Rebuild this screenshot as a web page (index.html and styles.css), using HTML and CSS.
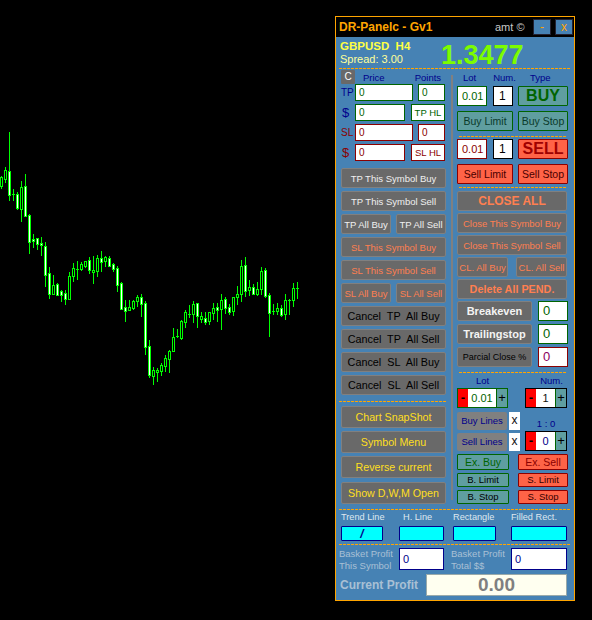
FILE: index.html
```html
<!DOCTYPE html>
<html lang="en">
<head>
<meta charset="utf-8">
<title>DR-Panelc - Gv1</title>
<link rel="stylesheet" href="styles.css">
</head>
<body>
<svg class="chart" width="335" height="620" viewBox="0 0 335 620" aria-label="GBPUSD H4 candles">
<path class="wick" d="M1.5 176V189M5.5 167V183M9.5 132V201M13.5 189V201M17.5 192V210M21.5 181V222M25.5 174V217M29.5 214V254M33.5 234V248M37.5 238V250M41.5 237V256M45.5 242V287M49.5 267V299M53.5 275V295M57.5 283V296M61.5 290V302M65.5 290V305M69.5 272V300M73.5 263V282M77.5 261V280M81.5 262V271M85.5 261V268M89.5 257V274M93.5 256V284M97.5 255V277M101.5 251V272M105.5 256V267M109.5 256V267M113.5 263V272M117.5 266V292M121.5 282V310M125.5 300V322M129.5 300V311M133.5 300V310M137.5 295V307M141.5 294V317M145.5 301V355M149.5 340V378M153.5 367V385M157.5 368V382M161.5 363V376M165.5 355V372M169.5 350V373M173.5 328V352M177.5 329V338M181.5 320V340M185.5 310V328M189.5 305V318M193.5 301V323M197.5 303V328M201.5 312V323M205.5 312V325M209.5 312V325M213.5 303V320M217.5 303V322M221.5 294V330M225.5 297V314M229.5 304V315M233.5 297V316M237.5 286V305M241.5 260V302M245.5 257V297M249.5 280V296M253.5 284V295M257.5 282V296M261.5 267V295M265.5 268V298M269.5 293V337M273.5 304V315M277.5 303V315M281.5 305V317M285.5 294V320M289.5 299V315M293.5 283V307M297.5 282V299"/>
<path class="wick" d="M12 194.5h3M76 269.5h3M176 336.5h3M188 314.5h3M272 311.5h3M288 300.5h3M296 288.5h3"/>
<path class="bull" d="M.5 177.5h2v9h-2zM4.5 170.5h2v9h-2zM20.5 187.5h2v22h-2zM52.5 285.5h2v9h-2zM68.5 276.5h2v23h-2zM72.5 268.5h2v8h-2zM80.5 264.5h2v5h-2zM84.5 261.5h2v5h-2zM92.5 270.5h2v2h-2zM96.5 258.5h2v13h-2zM104.5 257.5h2v4h-2zM128.5 307.5h2v3h-2zM132.5 301.5h2v7h-2zM136.5 297.5h2v4h-2zM152.5 370.5h2v6h-2zM156.5 370.5h2v2h-2zM160.5 365.5h2v6h-2zM164.5 358.5h2v8h-2zM168.5 351.5h2v8h-2zM172.5 337.5h2v14h-2zM180.5 321.5h2v17h-2zM184.5 312.5h2v10h-2zM192.5 304.5h2v10h-2zM200.5 316.5h2v3h-2zM208.5 312.5h2v9h-2zM212.5 308.5h2v5h-2zM220.5 300.5h2v9h-2zM232.5 297.5h2v14h-2zM236.5 294.5h2v3h-2zM240.5 266.5h2v28h-2zM248.5 287.5h2v3h-2zM256.5 289.5h2v5h-2zM260.5 271.5h2v18h-2zM276.5 308.5h2v3h-2zM284.5 300.5h2v14h-2zM292.5 288.5h2v12h-2z"/>
<path class="bear" d="M8.5 171.5h2v24h-2zM16.5 194.5h2v14h-2zM24.5 186.5h2v30h-2zM28.5 215.5h2v27h-2zM32.5 239.5h2v2h-2zM36.5 238.5h2v6h-2zM40.5 243.5h2v2h-2zM44.5 246.5h2v29h-2zM48.5 273.5h2v21h-2zM56.5 284.5h2v11h-2zM60.5 291.5h2v4h-2zM64.5 293.5h2v6h-2zM88.5 260.5h2v10h-2zM100.5 258.5h2v4h-2zM108.5 258.5h2v8h-2zM112.5 264.5h2v5h-2zM116.5 268.5h2v17h-2zM120.5 283.5h2v26h-2zM124.5 307.5h2v4h-2zM140.5 297.5h2v7h-2zM144.5 303.5h2v44h-2zM148.5 346.5h2v29h-2zM196.5 303.5h2v13h-2zM204.5 318.5h2v4h-2zM216.5 307.5h2v3h-2zM224.5 299.5h2v9h-2zM228.5 307.5h2v5h-2zM244.5 265.5h2v26h-2zM252.5 287.5h2v7h-2zM264.5 270.5h2v26h-2zM268.5 295.5h2v18h-2zM280.5 308.5h2v7h-2z"/>
</svg>

<main class="panel">
  <header class="titlebar">
    <span class="title">DR-Panelc - Gv1</span>
    <span class="author">amt ©</span>
    <span class="win-btn">-</span>
    <span class="win-btn">x</span>
  </header>

  <section class="quote">
    <div class="quote-info">
      <div class="symbol">GBPUSD&nbsp; H4</div>
      <div class="spread">Spread: 3.00</div>
    </div>
    <div class="price">1.3477</div>
  </section>
  <div class="dash dash-full"></div>

  <section class="main">
    <div class="col-left">
      <div class="row head-row">
        <span class="clear-btn">C</span>
        <span class="lbl lbl-price">Price</span>
        <span class="lbl lbl-points">Points</span>
      </div>
      <div class="form-rows">
        <div class="row"><span class="tag tag-tp">TP</span><span class="field field-buy w-wide">0</span><span class="field field-buy w-pts">0</span></div>
        <div class="row"><span class="tag tag-cur tag-tp">$</span><span class="field field-buy w-mid">0</span><span class="field field-buy w-hl">TP HL</span></div>
        <div class="row"><span class="tag tag-sl">SL</span><span class="field field-sell w-wide">0</span><span class="field field-sell w-pts">0</span></div>
        <div class="row"><span class="tag tag-cur tag-sl">$</span><span class="field field-sell w-mid">0</span><span class="field field-sell w-hl">SL HL</span></div>
      </div>
      <div class="btn-stack first-stack">
        <button class="btn tp">TP This Symbol Buy</button>
        <button class="btn tp">TP This Symbol Sell</button>
        <div class="pair"><button class="btn tp">TP All Buy</button><button class="btn tp">TP All Sell</button></div>
        <button class="btn sl">SL This Symbol Buy</button>
        <button class="btn sl">SL This Symbol Sell</button>
        <div class="pair"><button class="btn sl">SL All Buy</button><button class="btn sl">SL All Sell</button></div>
        <button class="btn cancel">Cancel&nbsp; TP&nbsp; All Buy</button>
        <button class="btn cancel">Cancel&nbsp; TP&nbsp; All Sell</button>
        <button class="btn cancel">Cancel&nbsp; SL&nbsp; All Buy</button>
        <button class="btn cancel">Cancel&nbsp; SL&nbsp; All Sell</button>
      </div>
      <div class="dash dash-left"></div>
      <div class="btn-stack tall-stack">
        <button class="btn gold">Chart SnapShot</button>
        <button class="btn gold">Symbol Menu</button>
        <button class="btn gold">Reverse current</button>
        <button class="btn gold">Show D,W,M Open</button>
      </div>
    </div>

    <div class="separator"></div>

    <div class="col-right">
      <div class="row head-row trade-labels">
        <span class="lbl lbl-lot">Lot</span><span class="lbl lbl-num">Num.</span><span class="lbl lbl-type">Type</span>
      </div>
      <div class="trade-row">
        <span class="field field-buy lot-f">0.01</span><span class="field field-black num-f">1</span>
        <button class="btn act act-buy big">BUY</button>
      </div>
      <div class="order-row">
        <button class="btn act act-buy">Buy Limit</button><button class="btn act act-buy">Buy Stop</button>
      </div>
      <div class="dash dash-right d1"></div>
      <div class="trade-row sell-row">
        <span class="field field-sell lot-f">0.01</span><span class="field field-black num-f">1</span>
        <button class="btn act act-sell big">SELL</button>
      </div>
      <div class="order-row sell-orders">
        <button class="btn act act-sell">Sell Limit</button><button class="btn act act-sell">Sell Stop</button>
      </div>
      <div class="dash dash-right d2"></div>

      <div class="close-stack">
        <button class="btn close-all">CLOSE ALL</button>
        <button class="btn sl">Close This Symbol Buy</button>
        <button class="btn sl">Close This Symbol Sell</button>
        <div class="pair pair-cl"><button class="btn sl">CL. All Buy</button><button class="btn sl">CL. All Sell</button></div>
        <button class="btn delete">Delete All PEND.</button>
      </div>
      <div class="mgmt">
        <button class="btn strong">Breakeven</button><span class="field field-buy big-val">0</span>
        <button class="btn strong">Trailingstop</button><span class="field field-buy big-val">0</span>
        <button class="btn parcial">Parcial Close %</button><span class="field field-plain big-val">0</span>
      </div>
      <div class="dash dash-right d3"></div>

      <div class="spin-labels"><span class="lbl">Lot</span><span class="lbl">Num.</span></div>
      <div class="spin-row">
        <div class="spinner spin-lot"><span class="minus">-</span><span class="spin-val v-green">0.01</span><span class="plus">+</span></div>
        <div class="spinner spin-num"><span class="minus">-</span><span class="spin-val">1</span><span class="plus">+</span></div>
      </div>
      <div class="lines">
        <div class="lines-left">
          <div class="line-row"><span class="line-btn">Buy Lines</span><span class="x-box">x</span></div>
          <div class="line-row"><span class="line-btn">Sell Lines</span><span class="x-box">x</span></div>
        </div>
        <div class="ratio">
          <span class="lbl">1 : 0</span>
          <div class="spinner spin-num spin-ratio"><span class="minus">-</span><span class="spin-val v-blue">0</span><span class="plus">+</span></div>
        </div>
      </div>
      <div class="exec">
        <button class="btn act act-buy ex ex-main">Ex. Buy</button><button class="btn act act-sell ex ex-main">Ex. Sell</button>
        <button class="btn act act-buy ex dark">B. Limit</button><button class="btn act act-sell ex dark">S. Limit</button>
        <button class="btn act act-buy ex dark">B. Stop</button><button class="btn act act-sell ex dark">S. Stop</button>
      </div>
    </div>
  </section>

  <div class="dash dash-full dash-tools"></div>
  <section class="tools">
    <div class="tool t1"><span>Trend Line</span><button class="cyan">/</button></div>
    <div class="tool t2"><span>H. Line</span><button class="cyan"></button></div>
    <div class="tool t3"><span>Rectangle</span><button class="cyan"></button></div>
    <div class="tool t4"><span>Filled Rect.</span><button class="cyan"></button></div>
  </section>
  <div class="dash dash-full dash-basket"></div>
  <section class="basket">
    <div class="basket-label">Basket Profit<br>This Symbol</div>
    <span class="field field-navy">0</span>
    <div class="basket-label">Basket Profit<br>Total $$</div>
    <span class="field field-navy">0</span>
  </section>
  <section class="profit">
    <span class="profit-label">Current Profit</span>
    <span class="profit-value">0.00</span>
  </section>
</main>
</body>
</html>
```

FILE: styles.css
```css
* { box-sizing: border-box; }
html, body { margin: 0; padding: 0; }
body {
  width: 592px; height: 620px; overflow: hidden;
  background: #000; display: flex; align-items: flex-start;
  font-family: "Liberation Sans", Arial, sans-serif;
}
.chart { display: block; flex: none; }
.wick { fill: none; stroke: #00ff00; stroke-width: 1; shape-rendering: crispEdges; }
.bull { fill: #000; stroke: #00ff00; stroke-width: 1; shape-rendering: crispEdges; }
.bear { fill: #fff; stroke: #00ff00; stroke-width: 1; shape-rendering: crispEdges; }

.panel {
  flex: none; width: 240px; height: 585px; margin-top: 16px;
  border: 1px solid #ffa500; background: #4682b4;
  display: flex; flex-direction: column;
}
.titlebar {
  flex: none; height: 20px; background: #000; display: flex; align-items: center;
  padding: 0 0 0 3px;
}
.title { flex: none; width: 156px; color: #ffa500; font-size: 12px; font-weight: bold; white-space: nowrap; }
.author { flex: none; width: 38px; color: #c8c8c8; font-size: 11px; white-space: nowrap; }
.win-btn {
  flex: none; width: 18px; height: 16px; margin-right: 4px; background: #4682b4; border: 1px solid #223;
  color: #ffa500; font-size: 12px; line-height: 14px; text-align: center;
}
.win-btn:last-child { margin-right: 0; }

.quote { flex: none; height: 31px; display: flex; padding-left: 4px; }
.quote-info { width: 96px; padding-top: 2px; flex: none; }
.symbol { color: #ffff44; font-size: 11.5px; font-weight: bold; line-height: 14px; white-space: nowrap; }
.spread { color: #ffff99; font-size: 11px; line-height: 12px; white-space: nowrap; }
.price { color: #7cfc00; font-size: 27px; font-weight: bold; line-height: 31px; margin-left: 5px; padding-top: 3px; }

.dash {
  height: 1px; flex: none;
  background: repeating-linear-gradient(90deg, #ffa500 0 3px, transparent 3px 4px);
}
.dash-full { margin: 0 3px; }
.dash-left { width: 107px; margin: 6px 0 4px -2px; }
.dash-right { width: 107px; margin-left: 2px; }

.main { flex: none; height: 440px; display: flex; padding-left: 5px; padding-top: 1px; }
.col-left { width: 105px; flex: none; }
.separator { width: 2px; height: 425px; margin: 5px 4px 0 5px; background: #808080; flex: none; }
.col-right { width: 111px; flex: none; }

.row { display: flex; align-items: center; height: 17px; padding-right: 1px; }
.head-row { height: 14px; }
.clear-btn {
  width: 14px; height: 14px; background: #696969; border-radius: 1px; color: #fff;
  font-size: 10px; line-height: 14px; text-align: center;
}
.lbl { color: #00008b; font-size: 9.5px; white-space: nowrap; }
.lbl-price { margin-left: 8px; }
.lbl-points { margin-left: 30px; }
.form-rows { display: flex; flex-direction: column; gap: 3px; }
.tag { width: 14px; font-size: 10px; flex: none; }
.tag-tp { color: #00008b; }
.tag-sl { color: #8b0000; }
.tag-cur { font-size: 13px; padding-left: 1px; }
.field {
  display: block; background: #fff; height: 17px; font-size: 10px; line-height: 15px;
  padding-left: 3px; border: 1px solid #000; flex: none;
}
.field-buy { border-color: #006400; color: #006400; }
.field-sell { border-color: #8b0000; color: #8b0000; }
.field-black { border-color: #000; color: #000; }
.field-plain { border-color: #8b0000; color: #8b0060; }
.w-wide { width: 58px; }
.w-mid { width: 50px; }
.w-pts { width: 27px; margin-left: auto; }
.w-hl { width: 34px; margin-left: auto; text-align: center; padding: 0; font-size: 9.5px; }

.btn {
  display: block; width: 100%; height: 20px; padding: 0; margin: 0;
  border: 1px solid #808080; border-radius: 2px; background: #696969;
  font-family: inherit; font-size: 9.5px; white-space: nowrap;
}
.btn-stack { display: flex; flex-direction: column; gap: 3px; }
.first-stack { margin-top: 7px; }
.tall-stack .btn { height: 22px; }
.tall-stack .btn:last-child { margin-top: 1px; }
.pair { display: flex; justify-content: space-between; }
.pair .btn { width: 50px; }
.tp { color: #f0f0f0; }
.sl { color: #ff7f50; }
.cancel { color: #000; font-size: 10.8px; }
.gold { color: #ffdf20; font-size: 10.7px; }

.trade-labels { padding: 0; }
.lbl-lot { margin-left: 6px; }
.lbl-num { margin-left: 17px; }
.lbl-type { margin-left: 14px; }
.trade-row { display: flex; margin-top: 2px; height: 20px; }
.lot-f { width: 30px; height: 20px; line-height: 18px; font-size: 11px; padding-left: 4px; }
.num-f { width: 20px; height: 20px; line-height: 18px; font-size: 12px; margin-left: 6px; padding-left: 5px; }
.act { border-radius: 1px; font-size: 10.5px; }
.act-buy { background: #5f9ea0; border-color: #006400; color: #0a3a2a; }
.act-sell { background: #ff6347; border-color: #8b0000; color: #4a0000; }
.big { width: 50px; margin-left: 5px; font-size: 16px; font-weight: bold; }
.act-buy.big { color: #006400; }
.act-sell.big { color: #a00000; }
.order-row { display: flex; gap: 5px; margin-top: 5px; }
.order-row .btn:first-child { width: 56px; }
.order-row .btn:last-child { width: 50px; }
.d1 { margin-top: 5px; }
.sell-row { margin-top: 2px; height: 20px; }
.sell-orders { margin-top: 5px; }
.d2 { margin-top: 3px; }

.close-stack { width: 110px; margin-top: 3px; display: flex; flex-direction: column; gap: 2px; }
.close-all { color: #ff7f50; font-size: 12px; font-weight: bold; }
.pair-cl .btn { width: 51px; }
.delete { color: #ff7f50; font-size: 10.8px; font-weight: bold; }
.mgmt { display: grid; grid-template-columns: 75px 30px; column-gap: 6px; row-gap: 3px; margin-top: 2px; }
.strong { color: #f4f4f4; font-size: 11px; font-weight: bold; }
.parcial { color: #000; font-size: 9px; }
.big-val { height: 20px; font-size: 13px; line-height: 18px; padding-left: 4px; }
.d3 { margin-top: 5px; }

.spin-labels { display: flex; height: 13px; margin-top: 1px; align-items: center; }
.spin-labels .lbl:first-child { margin-left: 19px; }
.spin-labels .lbl:last-child { margin-left: 51px; }
.spin-row { display: flex; justify-content: space-between; width: 110px; margin-top: 1px; }
.spinner { display: flex; height: 20px; flex: none; background: #fff; border: 1px solid #006400; }
.spin-lot { width: 51px; }
.spin-num { width: 42px; border-color: #000; }
.minus {
  width: 10px; background: #ff0000; color: #000; font-size: 13px; font-weight: bold; line-height: 18px;
  text-align: center; flex: none;
}
.spin-val { flex: 1; font-size: 11px; line-height: 18px; text-align: center; color: #111; }
.v-green { color: #006400; }
.v-blue { color: #00008b; }
.plus {
  width: 11px; background: #5f9ea0; color: #000; font-size: 13px; line-height: 18px;
  text-align: center; flex: none; border-left: 1px solid #006400;
}
.lines { display: flex; justify-content: space-between; width: 110px; margin-top: 4px; height: 39px; }
.lines-left { display: flex; flex-direction: column; gap: 3px; }
.line-row { display: flex; gap: 2px; }
.line-btn {
  width: 50px; height: 18px; background: #808080; border-radius: 2px; color: #00008b;
  font-size: 9.5px; line-height: 17px; text-align: center; white-space: nowrap;
}
.x-box {
  width: 11px; height: 18px; background: #fff; color: #111; font-size: 12px;
  line-height: 17px; text-align: center;
}
.ratio { display: flex; flex-direction: column; align-items: center; width: 42px; justify-content: flex-end; }
.ratio .lbl { line-height: 12px; margin-bottom: 1px; }
.exec { display: grid; grid-template-columns: 52px 50px; column-gap: 9px; row-gap: 3px; margin-top: 3px; }
.ex { height: 14px; font-size: 9.5px; line-height: 12px; }
.ex-main { height: 16px; font-size: 10.5px; }
.act-buy.ex-main { color: #006400; }
.act-sell.ex-main { color: #8b0000; }
.dark { color: #000; }
.act-sell.dark { color: #300; }

.tools { flex: none; height: 34px; display: flex; padding-left: 5px; }
.tool { display: flex; flex-direction: column; flex: none; }
.tool span { height: 16px; font-size: 9.2px; line-height: 15px; color: #dfe8f0; white-space: nowrap; }
.cyan {
  display: block; height: 15px; width: 100%; padding: 0; background: #00ffff; border: 1px solid #00008b;
  border-radius: 1px; color: #00008b; font-family: inherit; font-size: 12px; font-weight: bold; font-style: italic; line-height: 12px;
}
.t1 { width: 42px; }
.t2 { width: 45px; margin-left: 16px; }
.t2 span { padding-left: 4px; }
.t3 { width: 43px; margin-left: 9px; }
.t4 { width: 56px; margin-left: 15px; }
.basket { flex: none; height: 26px; padding: 3px 0 0 3px; display: flex; }
.basket-label { width: 60px; color: #a9c0d4; font-size: 9.5px; line-height: 12px; flex: none; white-space: nowrap; }
.basket .field { height: 22px; line-height: 20px; width: 45px; font-size: 11px; padding-left: 3px; }
.basket .field:last-child { width: 56px; margin-right: 0; }
.field-navy { border-color: #00008b; color: #00008b; margin-right: 7px; }
.profit { flex: none; display: flex; align-items: center; height: 22px; margin-top: 3px; padding-left: 4px; }
.profit-label { width: 86px; color: #a9c0d4; font-size: 12px; font-weight: bold; flex: none; white-space: nowrap; }
.profit-value {
  width: 141px; height: 22px; background: #fffff0; border: 1px solid #9aa; color: #808080;
  font-size: 19px; font-weight: bold; line-height: 20px; text-align: center;
}
```
